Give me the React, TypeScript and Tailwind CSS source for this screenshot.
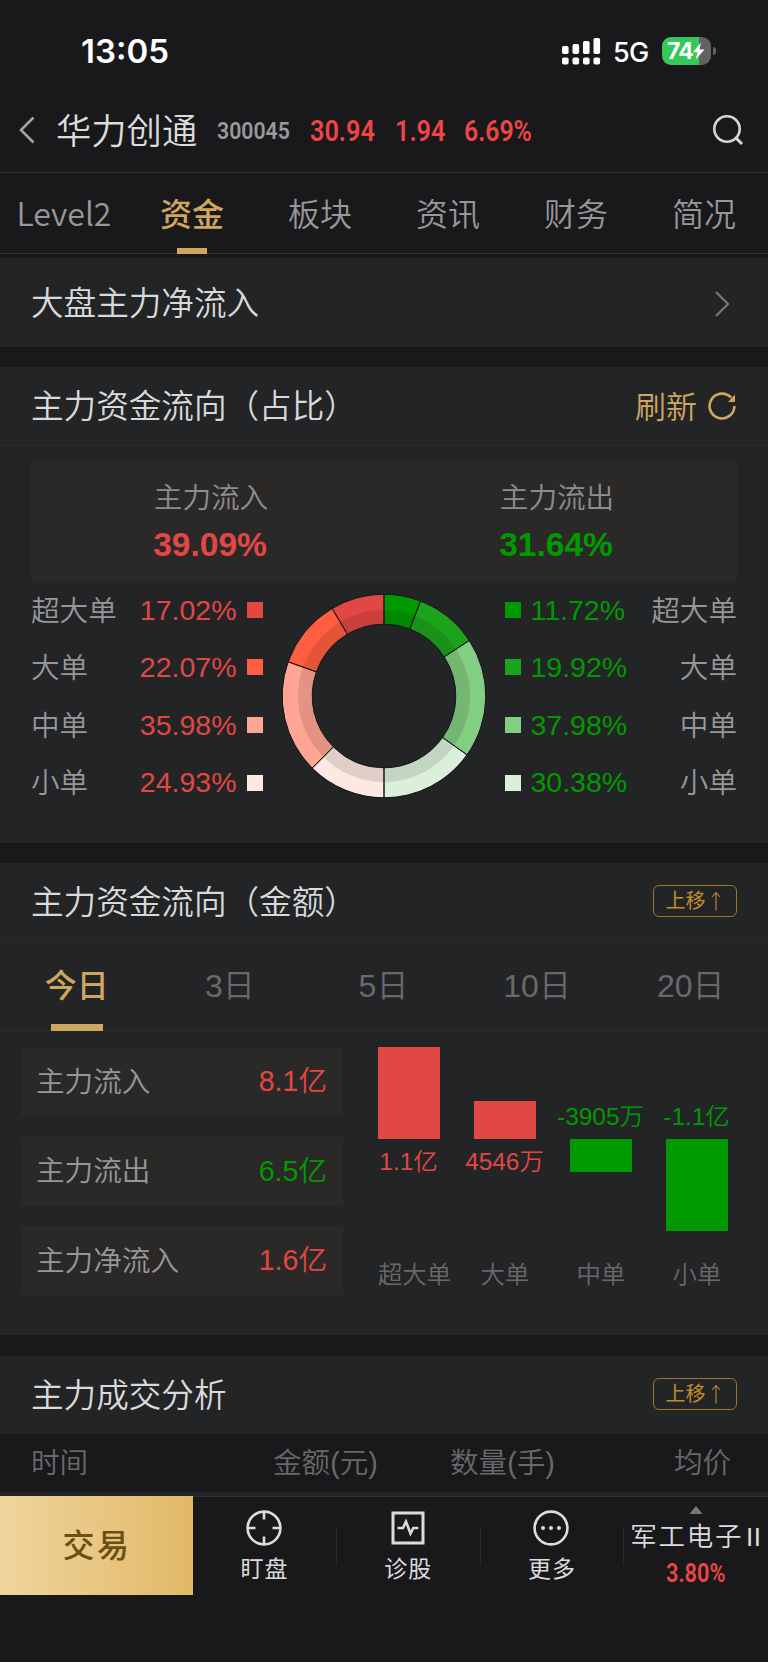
import type { ReactNode } from "react"

const mainTabs = ["Level2", "资金", "板块", "资讯", "财务", "简况"]
const dayTabs = ["今日", "3日", "5日", "10日", "20日"]

const inflow = [
  { label: "超大单", value: 17.02, color: "#e14744" },
  { label: "大单", value: 22.07, color: "#ff5f40" },
  { label: "中单", value: 35.98, color: "#ffa594" },
  { label: "小单", value: 24.93, color: "#fde8e2" },
]

const outflow = [
  { label: "超大单", value: 11.72, color: "#009a00" },
  { label: "大单", value: 19.92, color: "#1ba41b" },
  { label: "中单", value: 37.98, color: "#82ce82" },
  { label: "小单", value: 30.38, color: "#dbf0db" },
]

const totals = [
  { label: "主力流入", value: "8.1亿", tone: "text-[#e14744]" },
  { label: "主力流出", value: "6.5亿", tone: "text-[#009a00]" },
  { label: "主力净流入", value: "1.6亿", tone: "text-[#e14744]" },
]

const bars = [
  { label: "超大单", value: "1.1亿", height: 92, up: true },
  { label: "大单", value: "4546万", height: 38, up: true },
  { label: "中单", value: "-3905万", height: 33, up: false },
  { label: "小单", value: "-1.1亿", height: 92, up: false },
]

function point(angle: number, r: number) {
  const rad = (angle * Math.PI) / 180
  return `${(104 + r * Math.sin(rad)).toFixed(2)} ${(104 - r * Math.cos(rad)).toFixed(2)}`
}

function slice(from: number, to: number, outer: number, inner: number) {
  return `M${point(from, outer)}A${outer} ${outer} 0 0 1 ${point(to, outer)}L${point(to, inner)}A${inner} ${inner} 0 0 0 ${point(from, inner)}Z`
}

function Donut() {
  // outflow takes the right half from the top down, inflow closes the left half
  const parts = [...outflow, ...[...inflow].reverse()]
  let angle = 0
  const slices = parts.map((p) => {
    const from = angle
    angle += p.value * 1.8
    return { from, to: angle, color: p.color }
  })

  return (
    <svg width="208" height="208" viewBox="0 0 208 208">
      {slices.map((s) => (
        <path key={s.color} d={slice(s.from, s.to, 101.5, 72)} fill={s.color} />
      ))}
      <circle cx="104" cy="104" r="79" fill="none" stroke="#000" strokeOpacity="0.11" strokeWidth="14" />
      {slices.map((s) => (
        <path key={s.color} d={slice(s.from, s.to, 101.8, 71.8)} fill="none" stroke="#17181a" strokeWidth="1" />
      ))}
    </svg>
  )
}

function SectionHeader({ title, children }: { title: string; children?: ReactNode }) {
  return (
    <div className="mb-px flex h-[77px] items-center justify-between pl-[31px] pr-[31px]">
      <h2 className="pt-[4px] text-[32.6px] leading-none text-[#d9d9db]">{title}</h2>
      {children}
    </div>
  )
}

function MoveUp() {
  return (
    <button className="-mt-px flex h-8 w-[84px] items-center justify-center rounded-md border border-[#a07428] pr-px text-[20px] font-normal leading-none text-[#c18c2c]">
      上移
      <svg width="18" height="20" viewBox="0 0 18 20" fill="none" stroke="currentColor" strokeWidth="1.1">
        <path d="M10 19.5V1.5M6 6l4-4.5L14 6" />
      </svg>
    </button>
  )
}

function Condensed({ text, className }: { text: string; className: string }) {
  return <span className={`inline-block origin-left whitespace-nowrap font-['Roboto',sans-serif] leading-none ${className}`}>{text}</span>
}

function StatusBar() {
  return (
    <div className="flex h-[88px] items-center justify-between pl-[81px] pr-[52px] pt-[14px] font-['Inter',sans-serif] text-white">
      <span className="pt-px text-[33px] font-semibold leading-none">13:05</span>
      <div className="flex items-center">
        <svg width="40" height="28" viewBox="0 0 40 28" fill="#fff">
          <rect x="0" y="9" width="6.6" height="8" rx="1.8" />
          <rect x="10.5" y="7" width="6.6" height="10" rx="1.8" />
          <rect x="21" y="4" width="6.6" height="13" rx="1.8" />
          <rect x="31.5" y="1" width="6.6" height="16" rx="1.8" />
          <rect x="0" y="20.5" width="6.6" height="7" rx="1.8" />
          <rect x="10.5" y="20.5" width="6.6" height="7" rx="1.8" />
          <rect x="21" y="20.5" width="6.6" height="7" rx="1.8" />
          <rect x="31.5" y="20.5" width="6.6" height="7" rx="1.8" />
        </svg>
        <span className="ml-[11px] w-[38px] pt-[2px] text-[27px] font-[450] leading-none tracking-[-0.8px]">5G</span>
        <div className="ml-[11px] flex h-7 w-[49px] items-center overflow-hidden rounded-[9px] bg-gradient-to-r from-[#34c759] from-[76%] to-[#626264] to-[76%] pl-[5px]">
          <span className="text-[23px] font-bold leading-none tracking-[-0.8px]">74</span>
          <svg className="-ml-px" width="13" height="18" viewBox="0 0 13 18" fill="#fff">
            <path d="M9 0.5 0.8 10.3h4.7L3.8 17.5 12.500 7.600H7.400Z" />
          </svg>
        </div>
        <div className="ml-[2px] h-[8px] w-[3px] rounded-r-full bg-[#626264]" />
      </div>
    </div>
  )
}

function FlowRows({ side }: { side: "in" | "out" }) {
  const rows = side === "in" ? inflow : outflow
  const inward = side === "in"
  return (
    <div className="flex flex-col">
      {rows.map((row) => (
        <div
          key={row.label}
          className={`flex h-[57.6px] items-center text-[28.6px] leading-none ${inward ? "w-[231.5px]" : "w-[232px] flex-row-reverse"}`}
        >
          <span className={`flex-1 whitespace-nowrap pt-[2px] text-[#97979a] ${inward ? "text-left" : "text-right"}`}>{row.label}</span>
          <span className={inward ? "text-[28.5px] text-[#e14744]" : "text-[28.5px] text-[#009a00]"}>{row.value}%</span>
          <span className={`size-4 ${inward ? "ml-[10px]" : "mr-[9.5px]"}`} style={{ background: row.color }} />
        </div>
      ))}
    </div>
  )
}

function BarChart() {
  return (
    <div className="grid w-[384px] grid-cols-4 text-[24.4px] leading-none">
      {bars.map((bar) => (
        <div key={bar.label} className="flex flex-col items-center whitespace-nowrap">
          <div className="flex h-[92px] flex-col items-center justify-end">
            {bar.up ? (
              <div className="w-[62px] bg-[#e14744]" style={{ height: bar.height }} />
            ) : (
              <span className="mb-[10px] -ml-px text-[#009a00]">{bar.value}</span>
            )}
          </div>
          <div className="flex h-[92px] flex-col items-center">
            {bar.up ? (
              <span className="mt-[11px] -ml-px text-[#e14744]">{bar.value}</span>
            ) : (
              <div className="w-[62px] bg-[#009a00]" style={{ height: bar.height }} />
            )}
          </div>
          <span className={`mt-8 text-[#69696c] ${bar.label.length > 2 ? "pl-[11px]" : ""}`}>{bar.label}</span>
        </div>
      ))}
    </div>
  )
}

function NavItem({ label, children }: { label: string; children: ReactNode }) {
  return (
    <div className="flex w-[143.8px] items-center">
      <div className="-mt-px flex flex-1 flex-col items-center pr-px">
        {children}
        <span className="mt-[12px] pl-px text-[23px] font-normal leading-none tracking-[1px] text-[#dcdcde]">{label}</span>
      </div>
      <div className="h-[39px] w-px bg-[#2b2b2d]" />
    </div>
  )
}

function BottomBar() {
  return (
    <div className="flex h-[99px] border-t border-[#303133]">
      <button className="-mt-px h-[99px] w-[193px] bg-gradient-to-r from-[#efd59c] to-[#e2b868] pl-px pt-px text-[32px] font-medium leading-none tracking-[2.5px] text-[#6a5012]">
        交易
      </button>
      <NavItem label="盯盘">
        <svg width="36" height="36" viewBox="0 0 36 36" fill="none" stroke="#dcdcde" strokeWidth="2.6">
          <circle cx="18" cy="18" r="16.4" />
          <path d="M18 2v7.5M18 26.5v7.5M2 18h7.5M26.5 18h7.5" />
        </svg>
      </NavItem>
      <NavItem label="诊股">
        <svg width="36" height="36" viewBox="0 0 36 36" fill="none" stroke="#dcdcde" strokeWidth="3">
          <rect x="3" y="3" width="30" height="30" />
          <path d="M7.5 18H13l3-6.5 4.5 12 2.8-5.5h5" strokeWidth="2.6" />
        </svg>
      </NavItem>
      <NavItem label="更多">
        <svg width="36" height="36" viewBox="0 0 36 36" fill="none" stroke="#dcdcde" strokeWidth="2.6">
          <circle cx="18" cy="18" r="16.4" />
          <g fill="#dcdcde" stroke="none">
            <circle cx="10" cy="18" r="2" />
            <circle cx="18" cy="18" r="2" />
            <circle cx="26" cy="18" r="2" />
          </g>
        </svg>
      </NavItem>
      <div className="flex flex-1 flex-col items-center">
        <svg className="-ml-px mt-[9px]" width="14" height="8" viewBox="0 0 14 8" fill="#77777a">
          <path d="M7 0 13.5 8H0.5Z" />
        </svg>
        <div className="mt-[10px] flex h-[26px] items-center whitespace-nowrap pr-px text-[26.5px] leading-none tracking-[1.7px] text-[#dcdcde]">
          军工电子<span className="w-[18px] pl-[3px] font-['Roboto',sans-serif] font-normal tracking-[0.5px]">II</span>
        </div>
        <div className="mt-[11px] w-[60px]">
          <Condensed text="3.80%" className="scale-x-[0.87] text-[25px] font-semibold text-[#ee4545]" />
        </div>
      </div>
    </div>
  )
}

export default function App() {
  return (
    <div className="flex h-[1663px] w-[768px] flex-col overflow-hidden border-b border-white bg-[#19191b] font-['Liberation_Sans','Noto_Sans_CJK_SC',sans-serif] font-[350]">
      <StatusBar />

      <header className="flex h-[84px] items-center pl-[18px] pr-[23px]">
        <svg width="18" height="28" viewBox="0 0 18 28" fill="none" stroke="#a3a3a5" strokeWidth="2.6">
          <path d="M15.5 1.5 3 14 15.5 26.5" />
        </svg>
        <h1 className="ml-[20px] w-[161px] pt-[3px] text-[35.3px] leading-none text-[#dcdcde]">华力创通</h1>
        <Condensed text="300045" className="w-[93px] scale-x-[0.885] pt-px text-[24px] font-semibold text-[#99999b]" />
        <Condensed text="30.94" className="w-[85px] scale-x-[0.87] pt-[2px] text-[29px] font-semibold text-[#ee4545]" />
        <Condensed text="1.94" className="w-[69px] scale-x-[0.87] pt-[2px] text-[29px] font-semibold text-[#ee4545]" />
        <Condensed text="6.69%" className="scale-x-[0.855] pt-[2px] text-[29px] font-semibold text-[#ee4545]" />
        <svg className="ml-auto" width="34" height="34" viewBox="0 0 34 34" fill="none" stroke="#d5d5d7" strokeWidth="2.6">
          <circle cx="16" cy="16" r="12.7" />
          <path d="m25 25 6 6" strokeWidth="3" />
        </svg>
      </header>

      <nav className="grid h-[82px] grid-cols-6 border-y border-[#2f3032]">
        {mainTabs.map((tab, i) => (
          <div
            key={tab}
            className={`relative flex items-center justify-center text-[32px] leading-none ${i === 1 ? "font-medium text-[#cfa660]" : "text-[#97979a]"} ${i === 0 ? "pb-[2px] font-['Noto_Sans_CJK_SC',sans-serif]" : "pt-[4px]"}`}
          >
            {tab}
            {i === 1 && <div className="absolute -bottom-px left-1/2 h-[6px] w-[30px] -translate-x-1/2 bg-[#cfa660]" />}
          </div>
        ))}
      </nav>

      <section className="mt-[4px] flex h-[89px] items-center justify-between bg-[#222426] pl-[31px] pr-[37px]">
        <h2 className="pt-[3px] text-[32.6px] leading-none text-[#d9d9db]">大盘主力净流入</h2>
        <svg className="mt-[3px]" width="17" height="28" viewBox="0 0 17 28" fill="none" stroke="#78787b" strokeWidth="2.2">
          <path d="m2 2 12 12L2 26" />
        </svg>
      </section>

      <section className="mt-5 h-[476px] bg-[#222426]">
        <SectionHeader title="主力资金流向（占比）">
          <button className="flex items-center pt-px text-[31px] leading-none text-[#cfa660]">
            <span className="pt-[3px]">刷新</span>
            <svg className="ml-[10px]" width="30" height="30" viewBox="0 0 30 30" fill="none" stroke="currentColor" strokeWidth="2.6">
              <path d="M27.4 15a12.4 12.4 0 1 1-3.2-8.3" />
              <path d="M28 3.5v7.5h-7Z" fill="currentColor" stroke="none" />
            </svg>
          </button>
        </SectionHeader>
        <div className="border-t border-[#2b2c2e]" />

        <div className="mx-[31px] mt-[14px] grid h-[121px] grid-cols-2 bg-[#2b2927] pl-[6px] pr-[8px] text-center leading-none">
          <div className="pt-6">
            <p className="pl-[2px] text-[28.6px] text-[#8d8d8f]">主力流入</p>
            <p className="mt-[15px] text-[33.5px] font-bold text-[#e14744]">39.09%</p>
          </div>
          <div className="pt-6">
            <p className="pl-[2px] text-[28.6px] text-[#8d8d8f]">主力流出</p>
            <p className="mt-[15px] text-[33.5px] font-bold text-[#009a00]">31.64%</p>
          </div>
        </div>

        <div className="flex justify-between px-[31px]">
          <FlowRows side="in" />
          <div className="mt-[11px]">
            <Donut />
          </div>
          <FlowRows side="out" />
        </div>
      </section>

      <section className="mt-5 h-[472px] bg-[#222426]">
        <SectionHeader title="主力资金流向（金额）">
          <MoveUp />
        </SectionHeader>
        <div className="-mt-px grid h-[91px] grid-cols-5 border-y border-[#292a2c]">
          {dayTabs.map((tab, i) => (
            <div
              key={tab}
              className={`relative flex items-center justify-center text-[32px] leading-none ${i === 0 ? "font-medium text-[#cfa660]" : "pr-px text-[#69696c]"}`}
            >
              {tab}
              {i === 0 && <div className="absolute -bottom-px left-1/2 h-[7px] w-[52px] -translate-x-1/2 bg-[#cfa660]" />}
            </div>
          ))}
        </div>

        <div className="mt-4 flex justify-between pl-[21px] pr-[23px]">
          <div className="flex w-[322px] flex-col gap-[20.5px]">
            {totals.map((item) => (
              <div key={item.label} className="flex h-[69px] items-center justify-between bg-[#2b2927] pl-[15px] pr-[16px] text-[28.6px] leading-none">
                <span className="pt-px text-[#97979a]">{item.label}</span>
                <span className={item.tone}>{item.value}</span>
              </div>
            ))}
          </div>
          <BarChart />
        </div>
      </section>

      <section className="mt-[21px] bg-[#222426]">
        <SectionHeader title="主力成交分析">
          <MoveUp />
        </SectionHeader>
        <div className="flex h-[58px] items-center bg-[#19191b] pl-[31px] pt-px text-[28.6px] leading-none text-[#69696c]">
          <span className="w-[242px]">时间</span>
          <span className="w-[177px]">金额(元)</span>
          <span className="w-[224px]">数量(手)</span>
          <span>均价</span>
        </div>
        <div className="h-[4px]" />
      </section>

      <BottomBar />
    </div>
  )
}
